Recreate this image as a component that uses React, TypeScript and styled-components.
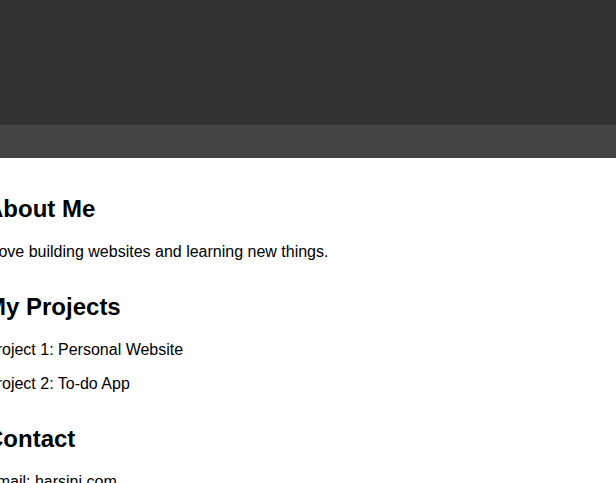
import React from "react";
import styled, { createGlobalStyle } from "styled-components";

const GlobalStyle = createGlobalStyle`
  html, body {
    margin: 0;
    padding: 0;
    background: #ffffff;
    overflow: hidden;
  }
  body {
    font-family: "Liberation Sans", Arial, sans-serif;
    color: #000000;
  }
`;

const Header = styled.header`
  height: 125px;
  background: #333333;
  color: #ffffff;
`;

const Nav = styled.nav`
  height: 33px;
  background: #444444;
`;

const Main = styled.main`
  margin-left: -14px;
  padding-top: 20.5px;
`;

const Section = styled.section`
  display: flow-root;
`;

const Title = styled.h2`
  font-size: 24px;
  font-weight: bold;
  margin: 16.5px 0 19.5px;
  line-height: normal;
`;

const Text = styled.p`
  font-size: 16px;
  margin: 16px 0;
  line-height: normal;
`;

export default function App() {
  return (
    <>
      <GlobalStyle />
      <Header />
      <Nav />
      <Main>
        <Section>
          <Title>About Me</Title>
          <Text>I love building websites and learning new things.</Text>
        </Section>
        <Section>
          <Title>My Projects</Title>
          <Text>Project 1: Personal Website</Text>
          <Text>Project 2: To-do App</Text>
        </Section>
        <Section>
          <Title>Contact</Title>
          <Text>Email: harsini.com</Text>
        </Section>
      </Main>
    </>
  );
}
